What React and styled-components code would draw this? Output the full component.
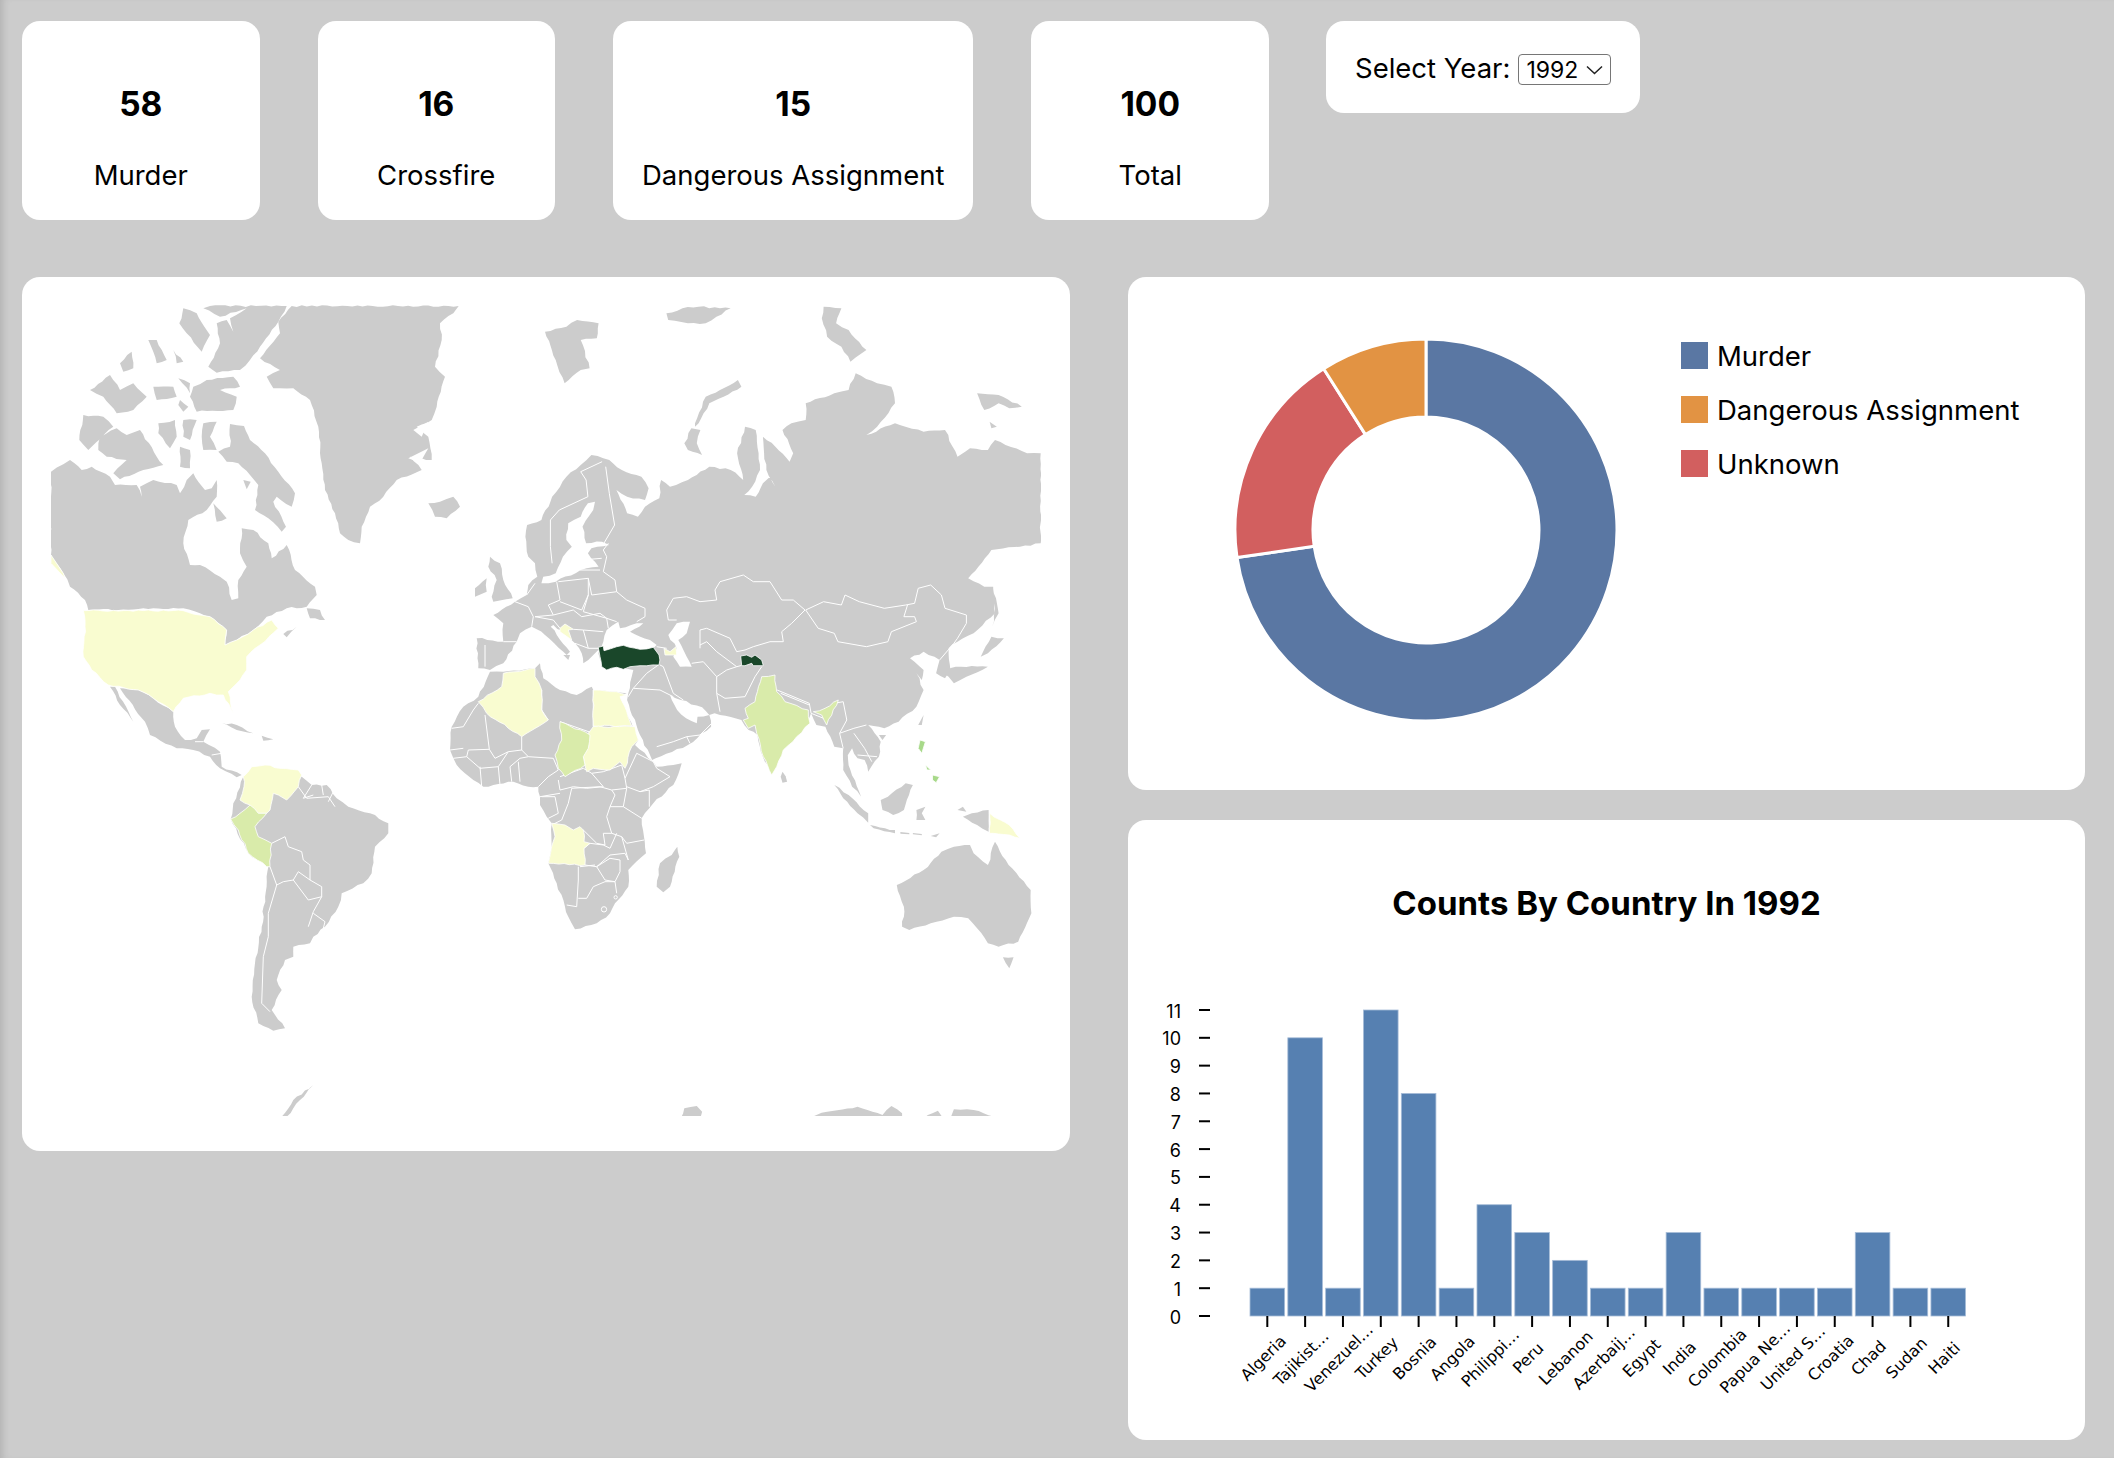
import React from "react";
import styled, { createGlobalStyle } from "styled-components";

const GlobalStyle = createGlobalStyle`
  html, body {
    margin: 0;
    padding: 0;
    background: #cccccc;
  }
  body {
    font-family: Inter, "Liberation Sans", sans-serif;
    color: #000;
  }
`;

const Page = styled.div`
  box-sizing: border-box;
  height: 1458px;
  padding: 21px 0 0 22px;
  box-shadow: inset 7px 0 7px -4px rgba(0, 0, 0, 0.12);
  display: flex;
  flex-direction: column;
  gap: 57px;
`;

const TopRow = styled.div`
  display: flex;
  align-items: flex-start;
  gap: 58px;
`;

const Card = styled.div`
  background: #fff;
  border-radius: 18px;
`;

const StatCard = styled(Card)`
  box-sizing: border-box;
  min-width: 237.5px;
  height: 199px;
  padding: 0 29px;
  display: flex;
  flex-direction: column;
  align-items: center;
  text-align: center;
`;

const StatValue = styled.div`
  font-size: 33.5px;
  font-weight: 700;
  line-height: 40px;
  margin-top: 63px;
`;

const StatLabel = styled.div`
  font-size: 27.5px;
  line-height: 34px;
  margin-top: 34px;
  white-space: nowrap;
`;

const YearCard = styled(Card)`
  box-sizing: border-box;
  height: 92px;
  margin-left: -1px;
  padding: 30px 29px 0;
  display: flex;
  align-items: flex-start;
  gap: 8px;
  font-size: 27.5px;
  line-height: 34px;
`;

const YearSelect = styled.select`
  appearance: none;
  box-sizing: border-box;
  width: 93px;
  height: 31px;
  margin-top: 3px;
  padding: 0 0 0 7px;
  border: 1px solid #767676;
  border-radius: 4px;
  color: #000;
  font-family: Inter, "Liberation Sans", sans-serif;
  font-size: 23px;
  background: #fff url("data:image/svg+xml,%3Csvg xmlns='http://www.w3.org/2000/svg' width='17' height='10'%3E%3Cpath d='M1 1.5l7.5 7 7.5-7' fill='none' stroke='%23222' stroke-width='1.5'/%3E%3C/svg%3E") no-repeat right 7px center;
`;

const MainRow = styled.div`
  display: flex;
  align-items: flex-start;
  gap: 58px;
`;

const MapPanel = styled(Card)`
  box-sizing: border-box;
  width: 1048px;
  height: 874px;
  padding: 28px 29px;
`;

const MapSvg = styled.svg`
  display: block;
`;

const RightColumn = styled.div`
  width: 957px;
  display: flex;
  flex-direction: column;
  gap: 30px;
`;

const DonutPanel = styled(Card)`
  box-sizing: border-box;
  height: 513px;
  padding: 62px 0 0 107px;
  display: flex;
  align-items: flex-start;
  gap: 64px;
`;

const Legend = styled.div`
  margin-top: 3px;
  display: flex;
  flex-direction: column;
  gap: 27px;
`;

const LegendItem = styled.div`
  display: flex;
  align-items: center;
  gap: 9px;
  height: 27px;
  font-size: 27.5px;
  white-space: nowrap;
`;

const Swatch = styled.span`
  width: 27px;
  height: 27px;
  background: ${(p) => p.$color};
`;

const BarPanel = styled(Card)`
  box-sizing: border-box;
  height: 620px;
  padding-top: 63px;
`;

const BarTitle = styled.h2`
  margin: 0 0 57px;
  font-size: 33px;
  line-height: 40px;
  font-weight: 700;
  text-align: center;
`;

const BarSvg = styled.svg`
  display: block;
`;

const AxisValue = styled.text`
  font-family: Inter, "Liberation Sans", sans-serif;
  font-size: 18px;
  text-anchor: end;
  dominant-baseline: central;
`;

const AxisName = styled.text`
  font-family: "DejaVu Sans", sans-serif;
  font-size: 16px;
  text-anchor: middle;
  dominant-baseline: central;
`;

// crops of the reference the outlines were read from: x, y, x scale, y scale
const T3 = [20, 280, 3, 3];
const T4 = [520, 280, 2.8, 3];
const T5 = [20, 670, 3, 3];
const T6 = [520, 670, 2.8, 3];
const T10 = [460, 520, 3, 3];
const T11 = [440, 690, 3, 3];

const pts = (t, s) =>
  s
    .trim()
    .split(/\s+/)
    .map((q) => {
      const [a, b] = q.split(",").map(Number);
      return [t[0] + a / t[2], t[1] + b / t[3]];
    });

// breaks long straight edges so coasts look crinkled instead of ruled
const crinkle = (list, amp) => {
  const out = [];
  list.forEach(([x, y], i) => {
    out.push([x, y]);
    const [nx, ny] = list[(i + 1) % list.length];
    const len = Math.hypot(nx - x, ny - y);
    const n = Math.floor(len / 5);
    for (let k = 1; k < n; k++) {
      const f = k / n;
      const h = Math.sin((x + k) * 12.9898 + (y - k) * 78.233) * 43758.5453;
      const off = (h - Math.floor(h) - 0.5) * 2 * amp;
      out.push([x + (nx - x) * f - ((ny - y) / len) * off, y + (ny - y) * f + ((nx - x) / len) * off]);
    }
  });
  return out;
};

const toD = (list) => "M" + list.map(([x, y]) => `${x.toFixed(1)},${y.toFixed(1)}`).join(" L");
const gather = (segs) => segs.flatMap(([t, s]) => pts(t, s));
const open = (...segs) => toD(gather(segs));
const shape = (...segs) => toD(crinkle(gather(segs), 0.9)) + "Z";
const plain = (...segs) => toD(gather(segs)) + "Z";

const LAND = [
  // canada
  shape([T3, "93,575 130,553 150,540 185,570 215,560 270,590 285,615 350,615 365,650 360,620 400,600 470,615 480,640 500,600 520,580 555,630 575,625 590,600 590,650 560,690 505,720 490,790 510,855 540,855 600,890 620,905 635,960 655,955 655,900 680,860 660,820 665,745 700,750 745,790 755,835 800,795 825,870 885,920 890,945 860,980 800,985 740,1010 700,1050 650,1080 615,1095 620,1050 570,1010 540,1000 490,985 205,990 195,960 150,920 130,880 93,825 93,575"]),
  shape([T3, "630,432 672,438 690,480 735,520 775,575 825,640 815,680 770,650 760,665 798,740 785,755 745,715 705,690 715,615 690,585 655,550 620,545 595,515 630,500"]),
  shape([T3, "490,85 530,100 570,165 545,215 500,160 478,130"]),
  shape([T3, "570,78 800,78 775,125 720,200 690,240 660,270 590,278 565,260 600,190 590,130 620,120 640,155 630,115 680,85 600,110 550,85"]),
  shape([T3, "520,320 560,300 640,290 660,320 600,330 650,350 640,390 530,395 510,350"]),
  shape([T3, "190,405 250,410 280,440 205,510 178,480"]),
  shape([T3, "240,470 290,445 320,465 360,450 410,530 430,555 370,570 300,598 280,580 320,540 260,530 235,510"]),
  shape([T3, "210,330 270,285 300,330 340,310 380,350 340,390 290,400 250,350"]),
  shape([T3, "385,180 410,180 440,240 410,250"]),
  shape([T3, "300,250 335,215 340,265 310,275"]),
  shape([T3, "460,210 490,245 470,250"]),
  shape([T3, "400,320 460,320 470,350 410,360"]),
  shape([T3, "475,295 510,310 510,340"]),
  shape([T3, "480,360 505,380 490,395 475,375"]),
  shape([T3, "415,430 465,420 470,470 450,505 415,460"]),
  shape([T3, "490,420 530,420 510,480 490,470"]),
  shape([T3, "480,500 510,510 510,565 480,560"]),
  shape([T3, "550,430 590,425 570,470 590,510 550,510 545,470"]),
  shape([T3, "580,670 620,715 590,725"]),
  shape([T3, "670,600 692,605 680,628"]),
  shape([T3, "860,985 900,990 915,1020 870,1015"]),
  shape([T3, "790,1062 830,1040 800,1072"]),
  // greenland, iceland, british isles
  shape([T3, "815,78 1316,78 1300,100 1260,130 1265,180 1245,260 1275,290 1250,380 1235,420 1190,440 1225,470 1235,540 1170,530 1205,570 1130,600 1090,650 1050,680 1025,740 1020,790 985,780 960,760 945,700 915,630 905,550 895,440 870,360 820,325 760,325 740,290 780,270 720,235 780,160 775,125"]),
  shape([T3, "1225,670 1260,665 1300,650 1320,680 1280,715 1245,710"]),
  shape([T3, "1410,830 1440,850 1450,900 1478,955 1420,965 1415,950 1430,900 1405,860"]),
  shape([T3, "1365,925 1400,895 1400,935 1365,950"]),
  // mexico and central america
  shape([T5, "300,55 355,60 400,85 460,125 465,170 495,210 530,205 545,180 570,178 550,215 600,245 605,290 665,315 650,322 600,295 570,260 520,240 470,235 390,195 375,155"]),
  shape([T5, "270,50 285,50 340,155 300,105"]),
  shape([T5, "605,158 650,165 700,190 650,180"]),
  shape([T5, "725,197 760,208 730,212"]),
  // south america
  shape([T5, "845,320 875,345 920,345 950,385 985,410 1050,430 1105,460 1105,490 1065,530 1055,610 1030,640 965,670 955,710 915,770 880,800 870,820 820,830 820,860 795,870 770,930 785,960 755,1020 795,1075 760,1082 715,1060 695,980 705,880 725,770 745,590 685,550 632,447 640,400 670,320"]),
  // eurasia
  shape(
    [T4, "15,770 20,735 60,720 90,650 130,590 170,555 200,525 250,540 285,570 340,590 360,625 350,660 300,650 270,630 300,700 330,710 350,680 390,655 395,600 420,620 470,600 530,560 590,570 625,600 608,520 630,440 660,450 668,520 672,570 650,620 628,645 660,650 680,610 700,590 715,620 690,570 680,470 715,500 755,545 765,520 735,450 760,430 800,420 800,370 880,340 920,330 940,280 1000,310 1040,320 1050,370 1000,440 970,465 1050,430 1130,455 1190,450 1225,530 1260,505 1310,510 1330,480 1420,520 1458,520 1458,790 1400,800 1320,810 1255,895 1300,920 1325,920 1330,1000 1270,1060 1225,1085 1200,1105 1205,1170 1190,1195 1165,1180 1175,1140 1130,1115 1092,1135 1130,1170 1125,1200"],
    [T6, "1110,10 1130,60 1110,110 1060,155 1020,175 975,165 1010,215 1005,260 975,305 965,270 945,265 930,235 915,260 915,240 925,300 955,380 930,350 905,300 905,235 880,230 855,170 830,165 815,130 800,170 760,205 730,240 705,315 680,260 665,195 640,180 620,150 545,130 530,135 535,170 470,225 380,265 370,270 330,180 300,90"],
    [T10, "505,520 515,470 520,450 490,445 470,440 440,450 425,430 415,400 420,385 400,405 385,420 370,430 365,400 345,370 320,345 280,315 272,320 330,395 320,405 310,395 255,345 230,328 215,320 180,340 170,365 130,430 90,450 55,445 50,355 130,365 130,310 100,285 165,245 200,225 205,195 232,170 225,130 205,110"]
  ),
  shape([T10, "310,405 330,405 325,420"]),
  // arctic russia
  shape([T4, "490,430 520,350 560,330 610,300 620,320 570,350 530,370 500,430 490,440"]),
  shape([T4, "480,445 505,450 495,490 510,525 470,510 460,490"]),
  shape([T4, "70,155 130,140 160,120 220,130 215,175 170,180 195,265 170,270 125,310 100,240"]),
  shape([T4, "410,100 455,85 500,80 560,85 590,85 550,110 520,130 470,130 415,120"]),
  shape([T4, "850,80 900,85 885,130 920,150 970,210 925,245 900,200 860,170 845,115"]),
  shape([T4, "1280,340 1340,345 1405,380 1370,385 1340,370 1300,390"]),
  shape([T4, "1315,425 1335,440 1320,445"]),
  // japan, taiwan, asia islands
  shape([T4, "1325,925 1340,1000 1322,1040 1330,990"]),
  shape([T4, "1320,1070 1355,1075 1310,1120 1290,1130"]),
  shape([T6, "1215,40 1250,20 1310,-10 1220,-10 1180,5 1200,20"]),
  shape([T6, "1115,165 1130,135 1125,165"]),
  shape([T6, "1005,195 1025,195 1015,210"]),
  shape([T6, "735,305 748,335 735,338 730,320"]),
  shape([T6, "880,345 920,375 975,430 975,458 945,430 905,385"]),
  shape([T6, "980,465 1050,480 1050,490 990,475"]),
  plain([T6, "1065,486 1090,489 1090,493 1065,491"]),
  plain([T6, "1100,489 1125,492 1125,496 1100,493"]),
  plain([T6, "1150,498 1175,490 1165,502"]),
  shape([T6, "1010,390 1030,380 1080,340 1100,345 1075,420 1045,435 1015,420"]),
  shape([T6, "1110,420 1135,410 1125,430 1135,450 1110,450"]),
  shape([T6, "1240,410 1250,425 1225,420"]),
  shape([T6, "1240,440 1265,430 1312,420 1312,485 1280,465"]),
  // oceania and antarctica
  shape([T6, "1055,645 1130,600 1180,545 1215,530 1260,525 1270,550 1310,585 1330,515 1360,570 1430,660 1432,730 1395,815 1340,830 1310,820 1280,775 1255,745 1215,740 1150,760 1090,780 1070,770 1075,710"]),
  shape([T6, "1352,862 1382,862 1370,895"]),
  shape([T5, "785,1340 820,1290 880,1245 840,1290 800,1340"]),
  shape([T6, "450,1345 460,1315 495,1308 510,1325 505,1345"]),
  shape([T6, "800,1345 860,1325 945,1310 1015,1335 1040,1308 1070,1330 1070,1345"]),
  shape([T6, "1130,1345 1170,1322 1185,1345"]),
  shape([T6, "1205,1345 1215,1318 1270,1320 1340,1345"]),
  // africa
  shape([T11, "150,-55 190,-55 285,-65 300,-80 310,-35 360,0 410,15 455,-10 460,0 530,5 560,10 535,20 575,100 595,150 585,165 640,215 650,230 700,225 725,220 700,285 640,340 605,385 612,440 618,490 565,540 565,590 525,640 510,670 470,700 405,718 385,680 375,650 350,580 325,520 335,470 335,400 320,380 300,345 300,320 295,290 265,290 220,275 130,290 100,270 50,225 30,180 35,110 70,50 115,20"]),
  shape([T11, "712,470 718,500 690,590 670,607 650,590 660,520 695,495"]),
];

const WATER = [
  shape([T4, "210,665 190,670 170,710 135,730 130,780 145,800 120,830 100,880 65,890 60,910 100,905 170,870 220,860 190,820 200,805 250,795 230,785 185,790 175,740 205,690"]),
  shape([T10, "430,365 440,330 475,305 480,325 530,310 550,310 510,335 570,360 590,375 580,385 540,390 480,378 430,392 425,378"]),
  shape([T10, "625,345 650,310 690,305 680,340 655,360 680,410 695,440 660,440 640,410 650,385"]),
  shape([T6, "420,75 450,90 510,112 530,135 497,140 495,160 465,145 440,120"]),
  // greenland fjords
  plain([T3, "1180,450 1225,425 1205,470"]),
  plain([T3, "1165,535 1225,505 1200,548"]),
];

const YELLOW = "#f9fcd0";
const PALE = "#d9ebaa";

const COUNTRIES = [
  { fill: YELLOW, d: plain([T3, "93,825 130,880 135,895 93,850"]) },
  {
    fill: YELLOW,
    d: shape(
      [T3, "190,992 490,992 540,1005 570,1010 620,1050 615,1095 650,1080 700,1050 755,1020 775,1045 720,1095 680,1130"],
      [T5, "680,0 660,30 625,65 640,130 610,75 570,70 490,85 460,125 400,85 355,60 265,45 215,0"],
      [T3, "190,1130 195,1040"]
    ),
  },
  { fill: YELLOW, d: shape([T5, "670,320 695,290 735,285 780,295 835,300 845,315 835,350 800,390 775,375 760,370 750,420 740,430 715,430 690,405 660,390 672,350"]) },
  { fill: PALE, d: shape([T5, "632,447 660,430 690,405 715,430 740,430 705,470 715,500 755,520 750,590 740,590 685,550 655,480"]) },
  { fill: YELLOW, d: shape([T10, "55,545 125,500 130,460 225,445 225,470 245,510 245,570 265,600 185,650 80,580"]) },
  { fill: YELLOW, d: shape([T10, "400,510 470,515 500,525 480,530 515,618 400,618"]) },
  { fill: YELLOW, d: shape([T10, "400,620 525,620 535,660 515,680 495,745 480,725 450,750 400,745 380,755 370,710 385,680 385,640"]) },
  { fill: PALE, d: shape([T10, "300,605 390,645 385,685 370,710 375,735 315,770 295,745 285,705 305,660"]) },
  { fill: YELLOW, d: shape([T11, "335,400 375,405 400,420 420,410 430,420 432,455 450,460 432,475 435,525 325,520 335,470 345,440"]) },
  { fill: PALE, d: shape([T10, "905,470 945,465 950,515 975,545 1045,570 1050,610 1010,650 970,690 950,740 935,765 910,710 890,640 885,615 865,625 850,600 865,595 855,565 885,545"]) },
  { fill: PALE, d: shape([T10, "1060,575 1095,565 1135,540 1100,615 1085,585"]) },
  { fill: "#a8d98a", d: plain([T6, "1120,210 1135,215 1125,250 1115,235"]) },
  { fill: "#a8d98a", d: plain([T6, "1155,315 1175,320 1165,338 1155,330"]) },
  { fill: "#a8d98a", d: plain([T6, "1135,285 1150,300 1140,300"]) },
  { fill: YELLOW, d: shape([T6, "1315,430 1345,450 1370,465 1400,505 1370,495 1325,490 1315,490"]) },
  { fill: YELLOW, d: plain([T10, "300,325 315,312 340,328 325,330 335,360 300,335"]) },
  { fill: YELLOW, d: plain([T10, "612,385 630,395 648,380 650,405 630,405 615,405"]) },
  { fill: "#1a472a", d: shape([T10, "415,382 430,378 432,392 470,380 490,376 540,388 580,382 597,405 597,435 540,437 510,440 490,448 470,442 440,450 425,440 420,410"]) },
  { fill: "#1a472a", d: plain([T10, "842,408 860,405 875,412 885,405 905,420 910,437 880,437 875,430 855,437 845,437"]) },
];

const BORDERS = [
  // asia
  [T10, "620,270 640,235 680,230 720,245 770,240 765,210 780,185 850,165 880,185 930,185 965,240 1000,240 1035,270"],
  [T10, "620,270 625,300 650,300"],
  [T10, "1035,270 995,310 965,335 970,365 930,365 880,380 855,390 830,395 810,355 740,325 720,330 720,385"],
  [T10, "720,375 740,365 770,395 830,440"],
  [T10, "695,430 730,425 770,470 800,450 830,440 870,430 905,430"],
  [T10, "770,470 770,520 795,535 855,530 885,470 905,440"],
  [T10, "770,520 780,575"],
  [T10, "600,435 610,440 640,520 670,540"],
  [T10, "595,435 560,460 520,505 600,510 640,530"],
  [T10, "520,505 505,530"],
  [T10, "590,680 640,665 680,650 720,645 755,610"],
  [T10, "680,650 690,670"],
  [T10, "590,380 620,385"],
  [T4, "800,990 850,965 900,975 910,945 950,965 1020,985 1080,975 1105,970 1115,925 1150,915 1180,945 1190,985 1250,1005 1250,1030 1225,1075 1215,1090"],
  [T4, "800,990 835,1045 880,1060 890,1085 970,1100 1030,1085 1040,1055 1110,1025 1105,1010 1075,1010 1085,975"],
  [T4, "1175,1140 1215,1090"],
  [T6, "720,60 810,100 815,130"],
  [T6, "730,70 810,105"],
  [T6, "815,130 850,145 880,100 905,95 915,150 895,190 905,235"],
  [T6, "895,190 935,175 970,165"],
  [T6, "935,190 965,235 985,275"],
  [T6, "945,255 1000,260"],
  // europe
  [T10, "75,375 75,440"],
  [T10, "130,365 170,365"],
  [T10, "165,245 205,260 220,290 215,320"],
  [T10, "200,225 225,190"],
  [T10, "290,185 300,240 265,255 280,285 225,290"],
  [T10, "295,185 385,175 385,225 365,270 300,245"],
  [T10, "360,150 420,150"],
  [T10, "365,120 425,115"],
  [T10, "385,175 395,225 470,215 465,180 430,155 440,110 430,90 445,70"],
  [T10, "385,225 370,275 440,295 470,305"],
  [T10, "470,215 500,240 555,265 555,290 530,305"],
  [T10, "365,290 420,280 440,295 445,325"],
  [T10, "370,330 430,335"],
  [T10, "280,285 340,270 365,290"],
  [T10, "225,290 280,300 300,325"],
  [T10, "340,328 370,330 385,385"],
  [T10, "345,370 385,385 420,385"],
  [T4, "170,575 185,600 190,650"],
  [T4, "110,690 85,720 85,800 90,850"],
  [T4, "190,650 110,690"],
  [T4, "170,575 230,545"],
  [T4, "240,560 250,640 265,735 235,790"],
  // africa
  [T11, "35,115 70,110 100,60 115,40"],
  [T11, "135,75 148,178 85,180 80,200"],
  [T11, "245,140 245,180 205,185 165,205 148,178"],
  [T11, "240,205 265,200 340,205 355,240 325,260 295,290"],
  [T11, "305,0 305,60 325,90"],
  [T11, "360,95 460,130 460,0"],
  [T11, "360,260 430,235 455,250 490,290 440,295 400,290 360,300 355,270"],
  [T11, "395,295 480,290 515,300 525,315 510,350 500,380 515,430 490,430 495,465 470,460 430,420"],
  [T11, "335,405 365,390 385,340 395,295"],
  [T11, "305,320 345,320 355,370 325,385"],
  [T11, "300,320 360,310"],
  [T11, "455,250 490,245 545,225 555,265 560,295 515,300"],
  [T11, "555,265 590,190 640,215 650,235 690,260 640,290 600,305 560,290"],
  [T11, "628,300 628,350"],
  [T11, "600,305 628,300"],
  [T11, "510,350 550,350 605,385"],
  [T11, "560,295 550,350"],
  [T11, "545,440 560,460 612,450"],
  [T11, "515,430 545,440 565,510 555,490 510,495 470,530 435,525"],
  [T11, "432,475 450,460 490,465 510,475 530,430"],
  [T11, "470,530 510,505 540,510 540,545 525,575 495,570 470,530"],
  [T11, "420,530 465,525"],
  [T11, "415,530 415,570 410,650 380,645"],
  [T11, "415,625 440,625 460,590 495,575 525,575 530,610"],
  [T11, "30,180 70,175"],
  [T11, "120,230 125,290"],
  [T11, "175,230 180,285"],
  [T11, "210,230 215,275"],
  [T11, "235,215 240,275"],
  [T11, "80,200 120,235 175,230 205,185"],
  [T11, "210,230 240,205"],
  [T11, "265,200 245,180"],
  [T11, "40,205 80,200"],
  // south america
  [T5, "720,285 715,310 770,340 775,375"],
  [T5, "875,345 850,385 880,375"],
  [T5, "905,345 910,375"],
  [T5, "940,365 925,395"],
  [T5, "835,350 860,385 925,380 945,410"],
  [T5, "755,520 795,500 805,530 845,545 850,570 870,585 870,630 835,605 820,630 790,635 770,645 750,590"],
  [T5, "820,630 865,690 905,680 905,650 870,630"],
  [T5, "770,645 745,730 745,800 730,860 725,1000 750,1025"],
  [T5, "880,730 915,755 910,775"],
  [T5, "905,680 880,725 865,770"],
  [T5, "525,215 550,215"],
  [T5, "575,255 605,250"],
];

const ROUND_SPOTS = [
  [T11, 492, 658, 8],
  [T11, 527, 622, 5],
];

const RING_CENTER = 191;
const OUTER = 191;
const INNER = 113;

// d for one donut slice, angles in degrees clockwise from 12 o'clock
const slicePath = (from, to) => {
  const at = (r, a) => {
    const rad = (a * Math.PI) / 180;
    return `${(RING_CENTER + r * Math.sin(rad)).toFixed(2)} ${(RING_CENTER - r * Math.cos(rad)).toFixed(2)}`;
  };
  const large = to - from > 180 ? 1 : 0;
  return `M${at(OUTER, from)}A${OUTER} ${OUTER} 0 ${large} 1 ${at(OUTER, to)}L${at(INNER, to)}A${INNER} ${INNER} 0 ${large} 0 ${at(INNER, from)}Z`;
};

const SLICES = [
  { name: "Murder", color: "#5a77a3", from: 0, to: 261.7 },
  { name: "Unknown", color: "#d25f5f", from: 261.7, to: 327.6 },
  { name: "Dangerous Assignment", color: "#e29343", from: 327.6, to: 360 },
];

const LEGEND = [SLICES[0], SLICES[2], SLICES[1]];

const STATS = [
  { value: 58, label: "Murder" },
  { value: 16, label: "Crossfire" },
  { value: 15, label: "Dangerous Assignment" },
  { value: 100, label: "Total" },
];

const COUNTS = [
  ["Algeria", 1],
  ["Tajikist…", 10],
  ["Venezuel…", 1],
  ["Turkey", 11],
  ["Bosnia", 8],
  ["Angola", 1],
  ["Philippi…", 4],
  ["Peru", 3],
  ["Lebanon", 2],
  ["Azerbaij…", 1],
  ["Egypt", 1],
  ["India", 3],
  ["Colombia", 1],
  ["Papua Ne…", 1],
  ["United S…", 1],
  ["Croatia", 1],
  ["Chad", 3],
  ["Sudan", 1],
  ["Haiti", 1],
];

const BASE_Y = 1316;
const UNIT = 306 / 11;
const FIRST_X = 1250;
const STEP = 37.83;
const BAR_W = 34.6;

const WorldMap = () => (
  <MapSvg width="990" height="811" viewBox="51 305 990 811">
    {LAND.map((d, i) => (
      <path key={i} d={d} fill="#cccccc" />
    ))}
    {WATER.map((d, i) => (
      <path key={i} d={d} fill="#ffffff" />
    ))}
    {BORDERS.map(([t, s], i) => (
      <path key={i} d={open([t, s])} fill="none" stroke="#ffffff" strokeWidth="1" />
    ))}
    {ROUND_SPOTS.map(([t, x, y, r], i) => (
      <circle key={i} cx={t[0] + x / t[2]} cy={t[1] + y / t[3]} r={r / t[2]} fill="none" stroke="#ffffff" strokeWidth="1" />
    ))}
    {COUNTRIES.map((c, i) => (
      <path key={i} d={c.d} fill={c.fill} stroke="#ffffff" strokeWidth="0.8" />
    ))}
  </MapSvg>
);

const CountChart = () => (
  <BarSvg width="957" height="440" viewBox="1128 980 957 440">
    {Array.from({ length: 12 }, (_, v) => {
      const y = BASE_Y - v * UNIT;
      return (
        <g key={v}>
          <line x1="1199" x2="1210" y1={y} y2={y} stroke="#000" strokeWidth="2" />
          <AxisValue x="1181" y={y + 1}>{v}</AxisValue>
        </g>
      );
    })}
    {COUNTS.map(([name, n], i) => {
      const x = FIRST_X + i * STEP;
      const tick = x + BAR_W / 2;
      return (
        <g key={name}>
          <rect x={x} y={BASE_Y - n * UNIT} width={BAR_W} height={n * UNIT} fill="#5680b1" stroke="#a6bcd8" strokeWidth="0.8" />
          <line x1={tick} x2={tick} y1={BASE_Y} y2={BASE_Y + 11} stroke="#000" strokeWidth="2" />
          <AxisName x={tick - 4} y="1358" transform={`rotate(-45 ${tick - 4} 1358)`}>{name}</AxisName>
        </g>
      );
    })}
  </BarSvg>
);

const App = () => (
  <Page>
    <GlobalStyle />
    <TopRow>
      {STATS.map((s) => (
        <StatCard key={s.label}>
          <StatValue>{s.value}</StatValue>
          <StatLabel>{s.label}</StatLabel>
        </StatCard>
      ))}
      <YearCard>
        <label htmlFor="year">Select Year:</label>
        <YearSelect id="year" defaultValue="1992">
          <option value="1992">1992</option>
          <option value="1993">1993</option>
          <option value="1994">1994</option>
        </YearSelect>
      </YearCard>
    </TopRow>
    <MainRow>
      <MapPanel>
        <WorldMap />
      </MapPanel>
      <RightColumn>
        <DonutPanel>
          <svg width="382" height="382" viewBox="0 0 382 382">
            {SLICES.map((s) => (
              <path key={s.name} d={slicePath(s.from, s.to)} fill={s.color} stroke="#fff" strokeWidth="3" />
            ))}
          </svg>
          <Legend>
            {LEGEND.map((s) => (
              <LegendItem key={s.name}>
                <Swatch $color={s.color} />
                {s.name}
              </LegendItem>
            ))}
          </Legend>
        </DonutPanel>
        <BarPanel>
          <BarTitle>Counts By Country In 1992</BarTitle>
          <CountChart />
        </BarPanel>
      </RightColumn>
    </MainRow>
  </Page>
);

export default App;
